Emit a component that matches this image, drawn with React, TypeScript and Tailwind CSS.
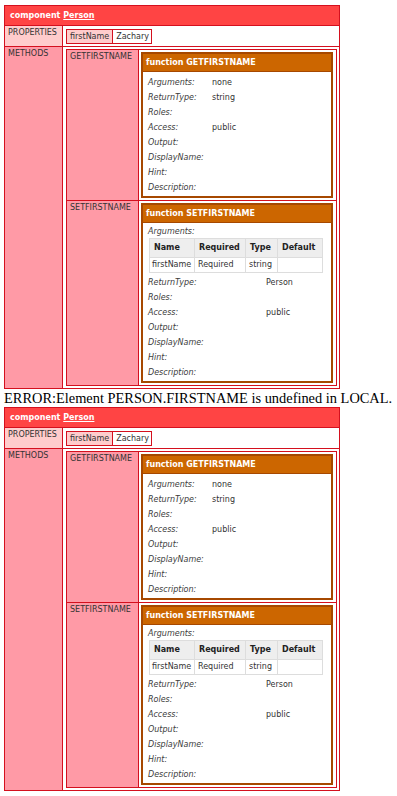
import React from "react";

type Arg = { name: string; required: string; type: string; def: string };

function InfoRow({ label, value, labelW }: { label: string; value?: string; labelW: string }) {
  return (
    <div className="flex h-[15px] items-center">
      <div className={`${labelW} shrink-0 italic text-[#3c3c3c]`}>{label}</div>
      <div className="text-[#333]">{value ?? ""}</div>
    </div>
  );
}

function ArgsTable({ args }: { args: Arg[] }) {
  return (
    <div className="ml-[1px] w-[174px] bg-[#dddddd] p-px flex flex-col gap-px">
      <div className="flex gap-px h-[18px]">
        <div className="w-[44px] bg-[#eeeeee] font-bold pl-[4px] flex items-center text-[#222]">Name</div>
        <div className="w-[50px] bg-[#eeeeee] font-bold pl-[4px] flex items-center text-[#222]">Required</div>
        <div className="w-[31px] bg-[#eeeeee] font-bold pl-[4px] flex items-center text-[#222]">Type</div>
        <div className="w-[44px] bg-[#eeeeee] font-bold pl-[4px] flex items-center text-[#222]">Default</div>
      </div>
      {args.map((a) => (
        <div key={a.name} className="flex gap-px h-[14px]">
          <div className="w-[44px] bg-white pl-[2px] flex items-center text-[#333]">{a.name}</div>
          <div className="w-[50px] bg-white pl-[3px] flex items-center text-[#333]">{a.required}</div>
          <div className="w-[31px] bg-white pl-[3px] flex items-center text-[#333]">{a.type}</div>
          <div className="w-[44px] bg-white pl-[3px] flex items-center text-[#333]">{a.def}</div>
        </div>
      ))}
    </div>
  );
}

function FnBox({
  name,
  args,
  returnType,
}: {
  name: string;
  args: Arg[] | null;
  returnType: string;
}) {
  const labelW = args ? "w-[118px]" : "w-[64px]";
  return (
    <div className="w-[192px] border-2 border-[#a64800] bg-[#a64800] flex flex-col gap-px">
      <div className="h-[17px] bg-[#cc6600] text-white font-bold pl-[3px] flex items-center">
        function {name}
      </div>
      <div className="bg-white pt-[3px] pb-[1px] pl-[5px] flex flex-col">
        {args ? (
          <>
            <div className="h-[12px] flex items-center italic text-[#3c3c3c]">Arguments:</div>
            <ArgsTable args={args} />
            <div className="h-[2px]" />
          </>
        ) : (
          <InfoRow label="Arguments:" value="none" labelW={labelW} />
        )}
        <InfoRow label="ReturnType:" value={returnType} labelW={labelW} />
        <InfoRow label="Roles:" labelW={labelW} />
        <InfoRow label="Access:" value="public" labelW={labelW} />
        <InfoRow label="Output:" labelW={labelW} />
        <InfoRow label="DisplayName:" labelW={labelW} />
        <InfoRow label="Hint:" labelW={labelW} />
        <InfoRow label="Description:" labelW={labelW} />
      </div>
    </div>
  );
}

function Dump() {
  return (
    <div className="w-[336px] bg-[#d4101e] p-px flex flex-col gap-px">
      <div className="h-[19px] bg-[#ff4444] text-white font-bold pl-[5px] flex items-center">
        <span>
          component <span className="underline">Person</span>
        </span>
      </div>
      {/* PROPERTIES */}
      <div className="flex gap-px">
        <div className="w-[57px] shrink-0 bg-[#ffcccc] pt-[2px] pl-[3px] text-[#333]">PROPERTIES</div>
        <div className="flex-1 bg-white pt-[3px] pb-[2px] pl-[3px]">
          <div className="inline-flex bg-[#d4101e] p-px gap-px">
            <div className="h-[13px] bg-[#ffcccc] px-[3px] flex items-center text-[#333]">firstName</div>
            <div className="h-[13px] bg-white pl-[3px] pr-[2px] flex items-center text-[#333]">Zachary</div>
          </div>
        </div>
      </div>
      {/* METHODS */}
      <div className="flex gap-px">
        <div className="w-[57px] shrink-0 bg-[#ff9aa6] pt-[2px] pl-[3px] text-[#333]">METHODS</div>
        <div className="flex-1 bg-white pt-[2px] pb-[2px] pl-[3px] pr-[2px]">
          <div className="bg-[#d4101e] p-px flex flex-col gap-px">
            <div className="flex gap-px">
              <div className="w-[71px] shrink-0 bg-[#ff9aa6] pt-[2px] pl-[3px] text-[#333]">GETFIRSTNAME</div>
              <div className="flex-1 bg-white pt-[2px] pb-[2px] pl-[2px]">
                <FnBox name="GETFIRSTNAME" args={null} returnType="string" />
              </div>
            </div>
            <div className="flex gap-px">
              <div className="w-[71px] shrink-0 bg-[#ff9aa6] pt-[2px] pl-[3px] text-[#333]">SETFIRSTNAME</div>
              <div className="flex-1 bg-white pt-[2px] pb-[2px] pl-[2px]">
                <FnBox
                  name="SETFIRSTNAME"
                  args={[{ name: "firstName", required: "Required", type: "string", def: "" }]}
                  returnType="Person"
                />
              </div>
            </div>
          </div>
        </div>
      </div>
    </div>
  );
}

export default function App() {
  return (
    <div className="bg-white pl-[4px] pt-[5px] font-['DejaVu_Sans',sans-serif] text-[8px] leading-[10px]">
      <Dump />
      <div className="font-['Liberation_Serif',serif] text-[14.4px] leading-[18px] text-black whitespace-nowrap">
        ERROR:Element PERSON.FIRSTNAME is undefined in LOCAL.
      </div>
      <Dump />
    </div>
  );
}
